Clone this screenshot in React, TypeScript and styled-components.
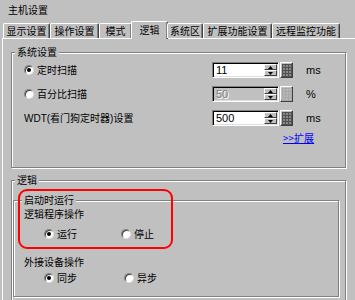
import React from 'react';
import styled, { createGlobalStyle } from 'styled-components';

const GlobalStyle = createGlobalStyle`
  html, body {
    margin: 0;
    padding: 0;
    background: #c0c0c0;
  }
  body {
    font-family: "Noto Sans CJK SC", "Liberation Sans", sans-serif;
    font-size: 10px;
    color: #000;
  }
`;

const Dialog = styled.div`
  width: 355px;
  height: 300px;
  overflow: hidden;
  position: relative;
  background: #c0c0c0;
  padding-left: 2px;
  box-sizing: border-box;
`;

const Title = styled.div`
  height: 21px;
  line-height: 20px;
  padding-left: 6px;
`;

const TabStrip = styled.div`
  display: flex;
  align-items: flex-end;
  height: 17px;
  padding-left: 1px;
  position: relative;
  z-index: 1;
`;

const Tab = styled.div<{ $w: number; $active?: boolean }>`
  box-sizing: border-box;
  width: ${(p) => p.$w}px;
  height: ${(p) => (p.$active ? 18 : 15)}px;
  margin: ${(p) => (p.$active ? '0 -1px -1px -1px' : '0')};
  line-height: ${(p) => (p.$active ? 15 : 13)}px;
  text-align: center;
  background: #c0c0c0;
  border-top: 1px solid #fff;
  border-left: 1px solid #fff;
  border-right: 1px solid #404040;
  box-shadow: inset -1px 0 0 #808080;
  border-radius: 2px 2px 0 0;
  white-space: nowrap;
`;

const Panel = styled.div`
  border-top: 1px solid #fff;
  border-left: 1px solid #fff;
  padding: 13px 0 0 8px;
`;

const Group = styled.div<{ $h: number; $top?: number; $right?: number; $left?: number }>`
  position: relative;
  box-sizing: border-box;
  height: ${(p) => p.$h}px;
  margin: ${(p) => p.$top ?? 0}px ${(p) => p.$right ?? 0}px 0 ${(p) => p.$left ?? 0}px;
  border: 1px solid #808080;
  box-shadow: inset 1px 1px 0 #fff, 1px 1px 0 #fff;
`;

const Legend = styled.span<{ $left: number }>`
  position: absolute;
  top: -8px;
  left: ${(p) => p.$left}px;
  padding: 0 2px;
  line-height: 14px;
  background: #c0c0c0;
`;

const SystemBody = styled.div`
  display: flex;
  flex-direction: column;
  gap: 8px;
  padding: 9px 0 0 12px;
`;

const Row = styled.div`
  display: flex;
  align-items: center;
  height: 16px;
`;

const Option = styled.label<{ $w?: number }>`
  display: flex;
  align-items: center;
  gap: 3px;
  width: ${(p) => (p.$w ? `${p.$w}px` : 'auto')};
  line-height: 12px;
  white-space: nowrap;
`;

const Radio = styled.span<{ $checked?: boolean }>`
  position: relative;
  flex: none;
  box-sizing: border-box;
  width: 10px;
  height: 10px;
  border-radius: 50%;
  background: #fff;
  border: 1px solid;
  border-color: #808080 #dfdfdf #dfdfdf #808080;
  box-shadow: inset 1px 1px 0 #404040;

  &::after {
    content: '';
    display: ${(p) => (p.$checked ? 'block' : 'none')};
    position: absolute;
    left: 2px;
    top: 2px;
    width: 4px;
    height: 4px;
    border-radius: 50%;
    background: #000;
  }
`;

const RowLabel = styled.span`
  width: 188px;
  line-height: 12px;
  white-space: nowrap;
`;

const Caption = styled.div<{ $top?: number }>`
  margin-top: ${(p) => p.$top ?? 0}px;
  line-height: 12px;
  white-space: nowrap;
`;

const Latin = styled.span`
  font-family: "Liberation Sans", sans-serif;
  font-size: 10px;
`;

const Field = styled.div<{ $disabled?: boolean }>`
  display: flex;
  box-sizing: border-box;
  width: 67px;
  height: 16px;
  border: 1px solid;
  border-color: #808080 #fff #fff #808080;
  box-shadow: inset 1px 1px 0 #000, inset -1px -1px 0 #dfdfdf;
  background: ${(p) => (p.$disabled ? '#c0c0c0' : '#fff')};
`;

const FieldValue = styled.span<{ $disabled?: boolean }>`
  flex: 1;
  padding: 1px 0 0 3px;
  font-family: "Liberation Sans", sans-serif;
  font-size: 11px;
  line-height: 13px;
  color: ${(p) => (p.$disabled ? '#808080' : '#000')};
  text-shadow: ${(p) => (p.$disabled ? '1px 1px 0 #fff' : 'none')};
`;

const Spin = styled.div`
  display: flex;
  flex-direction: column;
  width: 13px;
  padding: 1px 1px 1px 0;
`;

const SpinButton = styled.div`
  flex: 1;
  display: flex;
  align-items: center;
  justify-content: center;
  box-sizing: border-box;
  background: #c0c0c0;
  border: 1px solid;
  border-color: #fff #404040 #404040 #fff;
`;

const GridButton = styled.div`
  display: flex;
  align-items: center;
  justify-content: center;
  box-sizing: border-box;
  width: 13px;
  height: 16px;
  margin-left: 1px;
  background: #c0c0c0;
  border: 1px solid;
  border-color: #fff #404040 #404040 #fff;
  box-shadow: inset -1px -1px 0 #808080;
`;

const Unit = styled.span`
  margin-left: 13px;
  font-family: "Liberation Sans", sans-serif;
  font-size: 11px;
`;

const LinkRow = styled.div`
  padding-left: 259px;
  margin-top: -2px;
  line-height: 12px;
`;

const Link = styled.a`
  color: #0000ff;
  text-decoration: underline;
  cursor: pointer;
`;

const LogicBody = styled.div`
  padding-top: 19px;
`;

const StartBody = styled.div`
  padding: 7px 0 0 10px;
`;

const OptionRow = styled.div<{ $top: number }>`
  display: flex;
  align-items: center;
  height: 12px;
  margin-top: ${(p) => p.$top}px;
  padding-left: 20px;
`;

const Highlight = styled.div`
  position: absolute;
  left: 18px;
  top: 189px;
  width: 155px;
  height: 60px;
  box-sizing: border-box;
  border: 2px solid #ff0000;
  border-radius: 9px;
  pointer-events: none;
`;

const Arrow = ({ up }: { up?: boolean }) => (
  <svg width="5" height="3" viewBox="0 0 5 3">
    <path d={up ? 'M2.5 0 L5 3 L0 3 Z' : 'M0 0 L5 0 L2.5 3 Z'} fill="#000" />
  </svg>
);

const GridIcon = ({ disabled }: { disabled?: boolean }) => {
  const cells = [];
  for (let r = 0; r < 4; r++) {
    for (let k = 0; k < 3; k++) {
      cells.push(
        <rect
          key={`${r}-${k}`}
          x={1 + k * 3}
          y={1 + r * 3}
          width="2"
          height="2"
          fill={disabled ? '#b8b8b8' : '#8a8a8a'}
        />
      );
    }
  }
  return (
    <svg width="10" height="13" viewBox="0 0 10 13">
      <rect x="0" y="0" width="10" height="13" fill={disabled ? '#a8a8a8' : '#505050'} />
      {cells}
    </svg>
  );
};

const NumberField = ({ value, disabled }: { value: string; disabled?: boolean }) => (
  <>
    <Field $disabled={disabled}>
      <FieldValue $disabled={disabled}>{value}</FieldValue>
      <Spin>
        <SpinButton><Arrow up /></SpinButton>
        <SpinButton><Arrow /></SpinButton>
      </Spin>
    </Field>
    <GridButton><GridIcon disabled={disabled} /></GridButton>
  </>
);

const tabs = [
  { label: '显示设置', w: 47 },
  { label: '操作设置', w: 49 },
  { label: '模式', w: 33 },
  { label: '逻辑', w: 37, active: true },
  { label: '系统区', w: 36 },
  { label: '扩展功能设置', w: 69 },
  { label: '远程监控功能', w: 68 },
];

const App: React.FC = () => (
  <Dialog>
    <GlobalStyle />
    <Title>主机设置</Title>
    <TabStrip>
      {tabs.map((t) => (
        <Tab key={t.label} $w={t.w} $active={t.active}>{t.label}</Tab>
      ))}
    </TabStrip>
    <Panel>
      <Group $h={116} $right={9}>
        <Legend $left={3}>系统设置</Legend>
        <SystemBody>
          <Row>
            <Option $w={188}><Radio $checked />定时扫描</Option>
            <NumberField value="11" />
            <Unit>ms</Unit>
          </Row>
          <Row>
            <Option $w={188}><Radio />百分比扫描</Option>
            <NumberField value="50" disabled />
            <Unit>%</Unit>
          </Row>
          <Row>
            <RowLabel><Latin>WDT(</Latin>看门狗定时器<Latin>)</Latin>设置</RowLabel>
            <NumberField value="500" />
            <Unit>ms</Unit>
          </Row>
          <LinkRow><Link>&gt;&gt;扩展</Link></LinkRow>
        </SystemBody>
      </Group>
      <Group $h={150} $top={12} $right={9}>
        <Legend $left={3}>逻辑</Legend>
        <LogicBody>
          <Group $h={97} $left={1} $right={6}>
            <Legend $left={8}>启动时运行</Legend>
            <StartBody>
              <Caption>逻辑程序操作</Caption>
              <OptionRow $top={8}>
                <Option $w={77}><Radio $checked />运行</Option>
                <Option><Radio />停止</Option>
              </OptionRow>
              <Caption $top={16}>外接设备操作</Caption>
              <OptionRow $top={4}>
                <Option $w={80}><Radio $checked />同步</Option>
                <Option><Radio />异步</Option>
              </OptionRow>
            </StartBody>
          </Group>
        </LogicBody>
      </Group>
    </Panel>
    <Highlight />
  </Dialog>
);

export default App;
